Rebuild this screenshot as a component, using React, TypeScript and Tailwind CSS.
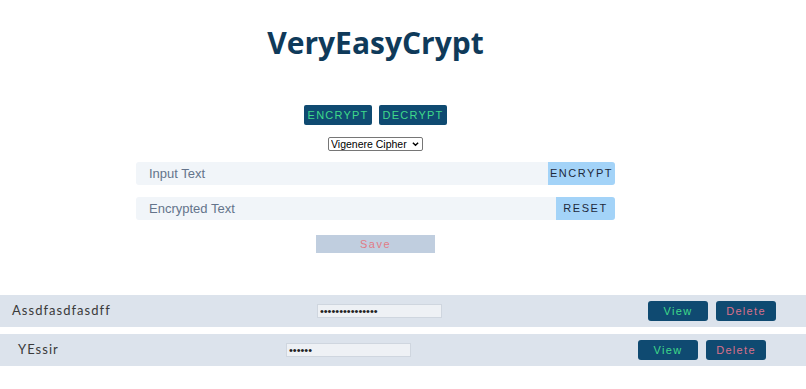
import React from 'react';

type Entry = { name: string; secret: string; pad: string };

const entries: Entry[] = [
  { name: 'Assdfasdfasdff', secret: 'aaaaaaaaaaaaaaa', pad: 'pl-[12px] pr-[30px]' },
  { name: 'YEssir', secret: 'aaaaaa', pad: 'pl-[18px] pr-[40px]' },
];

const SavedRow: React.FC<{ entry: Entry }> = ({ entry }) => (
  <div className={`flex h-[32px] items-center justify-between bg-[#dce3ec] ${entry.pad}`}>
    <span className="text-[13px] tracking-[0.08em] text-[#3a3a3a] [font-family:Lato,sans-serif]">{entry.name}</span>
    <input
      type="password"
      readOnly
      value={entry.secret}
      className="h-[14px] w-[125px] border border-[#cfd6df] bg-[#eef1f5] px-[2px] text-[11px] leading-none text-[#222] outline-none"
    />
    <div className="flex gap-[8px]">
      <button className="h-[20px] w-[60px] rounded-[3px] bg-[#0f4a71] text-[11px] tracking-[0.12em] text-[#3fd98a]">
        View
      </button>
      <button className="h-[20px] w-[60px] rounded-[3px] bg-[#0f4a71] text-[11px] tracking-[0.12em] text-[#d9708a]">
        Delete
      </button>
    </div>
  </div>
);

const App: React.FC = () => {
  return (
    <div className="min-h-[389px] bg-white [font-family:'Liberation_Sans',Arial,sans-serif]">
      <div className="flex w-[751px] flex-col items-center pt-[23px]">
        <h1 className="text-[30px] font-bold leading-[40px] text-[#0f3a5a] [font-family:'Open_Sans',sans-serif]">
          VeryEasyCrypt
        </h1>

        <div className="mt-[42px] flex gap-[7px]">
          <button className="h-[20px] w-[68px] rounded-[2px] bg-[#0f4a71] text-[11px] tracking-[0.11em] text-[#3fd98a]">
            ENCRYPT
          </button>
          <button className="h-[20px] w-[68px] rounded-[2px] bg-[#0f4a71] text-[11px] tracking-[0.11em] text-[#3fd98a]">
            DECRYPT
          </button>
        </div>

        <div className="relative mt-[12px] h-[14px] w-[95px]">
          <select className="block h-[14px] w-[95px] appearance-none rounded-[2px] border border-[#767676] bg-white py-0 pl-[2px] text-[10.5px] leading-[12px] text-black">
            <option>Vigenere Cipher</option>
          </select>
          <svg
            className="pointer-events-none absolute right-[4px] top-[4px] h-[6px] w-[7px]"
            viewBox="0 0 8 6"
            fill="none"
            stroke="#000"
            strokeWidth="1.6"
          >
            <path d="M1 1.5 L4 4.5 L7 1.5" />
          </svg>
        </div>

        <div className="mt-[11px] flex h-[23px] w-[479px] items-stretch rounded-[3px] bg-[#f1f5f9]">
          <span className="flex flex-1 items-center pl-[13px] text-[13px] text-[#64748b]">Input Text</span>
          <button className="w-[67px] rounded-r-[3px] bg-[#a3d3f8] text-[11px] tracking-[0.14em] text-[#1e293b]">
            ENCRYPT
          </button>
        </div>

        <div className="mt-[12px] flex h-[23px] w-[479px] items-stretch rounded-[3px] bg-[#f1f5f9]">
          <span className="flex flex-1 items-center pl-[13px] text-[13px] text-[#64748b]">Encrypted Text</span>
          <button className="w-[59px] rounded-r-[3px] bg-[#a3d3f8] text-[11px] tracking-[0.14em] text-[#1e293b]">
            RESET
          </button>
        </div>

        <button className="mt-[15px] h-[18px] w-[119px] bg-[#c0cedf] text-[11px] tracking-[0.14em] text-[#e07b86]">
          Save
        </button>
      </div>

      <div className="mt-[42px] flex flex-col gap-[7px]">
        {entries.map((e) => (
          <SavedRow key={e.name} entry={e} />
        ))}
      </div>
    </div>
  );
};

export default App;
